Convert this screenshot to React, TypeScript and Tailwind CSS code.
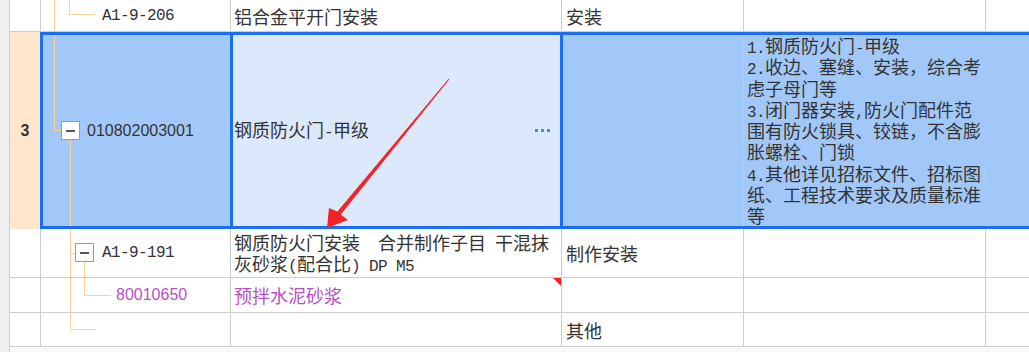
import React from "react";

const M = ({ children }: { children: React.ReactNode }) => (
  <span className="font-['Liberation_Mono',monospace] text-[16px] tracking-[-0.6px] leading-none whitespace-pre">{children}</span>
);

const Box = ({ className }: { className: string }) => (
  <div className={"absolute w-[19px] h-[19px] border border-[#9c9c9c] bg-white flex items-center justify-center " + className}>
    <div className="w-[9px] h-[2px] bg-[#555]" />
  </div>
);

const line = "absolute bg-[#fcd29c]";
const g = "border-[#cdcdcd]";
const L = "h-[21.25px] leading-[21.25px] overflow-visible";

export default function App() {
  return (
    <div className="relative w-[1029px] h-[352px] overflow-hidden bg-[#f9f9f9] flex text-[#333] font-['Noto_Sans_CJK_SC',sans-serif] text-[18px]">
      <div className={"w-[10px] h-full shrink-0 bg-[#f0f0f0] border-r " + g} />
      <div className="flex flex-col w-[1019px] shrink-0">
        {/* Row 1 */}
        <div className="flex h-[32px] shrink-0 bg-white">
          <div className={"w-[31px] shrink-0 border-r border-b " + g} />
          <div className={"relative w-[190px] shrink-0 border-r border-b flex items-center pl-[61px] " + g}>
            <div className={line + " left-[13px] top-0 bottom-0 w-px"} />
            <div className={line + " left-[28px] top-0 h-[15px] w-px"} />
            <div className={line + " left-[28px] top-[14px] h-px w-[26px]"} />
            <M>A1-9-206</M>
          </div>
          <div className={"w-[331px] shrink-0 border-r border-b flex items-center pl-[3px] leading-none " + g}>铝合金平开门安装</div>
          <div className={"w-[182px] shrink-0 border-r border-b flex items-center pl-[4px] leading-none " + g}>安装</div>
          <div className={"w-[242px] shrink-0 border-r border-b " + g} />
          <div className={"flex-1 border-b " + g} />
        </div>

        {/* Selected row */}
        <div className="flex h-[197px] shrink-0">
          <div className="w-[30px] shrink-0 bg-[#fde6cc] flex items-center justify-center font-['Liberation_Sans',sans-serif] font-bold text-[16px] text-[#333]">3</div>
          <div className="flex w-[992px] shrink-0 border-[3px] border-[#1a6ef5] bg-[#a2c8f9]">
            <div className="relative w-[187px] shrink-0 flex items-center pl-[44px] font-['Liberation_Sans',sans-serif] text-[16px]">
              <div className={line + " left-[11px] top-0 h-[96px] w-px"} />
              <div className={line + " left-[11px] top-[95px] h-px w-[7px]"} />
              <div className={line + " left-[27px] top-[105px] bottom-0 w-px"} />
              <Box className="left-[18px] top-[86px]" />
              010802003001
            </div>
            <div className="relative w-[333px] shrink-0 border-x-[3px] border-[#1a6ef5] bg-[#dce9fc] flex items-center pl-px leading-none">
              <span>钢质防火门<M>-</M>甲级</span>
              <div className="absolute left-[302px] top-[94px] flex gap-[3px]">
                <div className="w-[3px] h-[3px] bg-[#4a88d8]" />
                <div className="w-[3px] h-[3px] bg-[#4a88d8]" />
                <div className="w-[3px] h-[3px] bg-[#4a88d8]" />
              </div>
            </div>
            <div className="w-[181px] shrink-0 border-r border-[#bccadb]" />
            <div className="w-[242px] shrink-0 border-r border-[#bccadb] pl-[3px] whitespace-nowrap">
              <div className={L}><M>1.</M>钢质防火门<M>-</M>甲级</div>
              <div className={L}><M>2.</M>收边、塞缝、安装，综合考</div>
              <div className={L}>虑子母门等</div>
              <div className={L}><M>3.</M>闭门器安装<M>,</M>防火门配件范</div>
              <div className={L}>围有防火锁具、铰链，不含膨</div>
              <div className={L}>胀螺栓、门锁</div>
              <div className={L}><M>4.</M>其他详见招标文件、招标图</div>
              <div className={L}>纸、工程技术要求及质量标准</div>
              <div className={L}>等</div>
            </div>
            <div className="flex-1" />
          </div>
        </div>

        {/* Row 3 */}
        <div className="flex h-[49px] shrink-0 bg-white">
          <div className={"w-[31px] shrink-0 border-r border-b " + g} />
          <div className={"relative w-[190px] shrink-0 border-r border-b flex items-center pl-[61px] " + g}>
            <div className={line + " left-[29px] top-0 bottom-0 w-px"} />
            <div className={line + " left-[29px] top-[24px] h-px w-[5px]"} />
            <div className={line + " left-[43px] top-[33px] bottom-0 w-px"} />
            <Box className="left-[34px] top-[14px]" />
            <M>A1-9-191</M>
          </div>
          <div className={"w-[331px] shrink-0 border-r border-b flex flex-col justify-center pl-[3px] whitespace-nowrap " + g}>
            <div className="h-[21px] leading-[21px]">钢质防火门安装　合并制作子目<M> </M>干混抹</div>
            <div className="h-[21px] leading-[21px]">灰砂浆<M>(</M>配合比<M>) DP M5</M></div>
          </div>
          <div className={"w-[182px] shrink-0 border-r border-b flex items-center pl-[4px] leading-none " + g}>制作安装</div>
          <div className={"w-[242px] shrink-0 border-r border-b " + g} />
          <div className={"flex-1 border-b " + g} />
        </div>

        {/* Row 4 */}
        <div className="flex h-[35px] shrink-0 bg-white">
          <div className={"w-[31px] shrink-0 border-r border-b " + g} />
          <div className={"relative w-[190px] shrink-0 border-r border-b flex items-center pl-[75px] font-['Liberation_Sans',sans-serif] text-[16px] text-[#b84fc9] " + g}>
            <div className={line + " left-[29px] top-0 bottom-0 w-px"} />
            <div className={line + " left-[43px] top-0 h-[18px] w-px"} />
            <div className={line + " left-[43px] top-[17px] h-px w-[27px]"} />
            80010650
          </div>
          <div className={"relative w-[331px] shrink-0 border-r border-b flex items-center pl-[3px] leading-none text-[#b84fc9] " + g}>
            预拌水泥砂浆
            <div className="absolute top-0 right-0 w-0 h-0 border-t-[8px] border-l-[8px] border-t-[#ff1f1f] border-l-transparent" />
          </div>
          <div className={"w-[182px] shrink-0 border-r border-b " + g} />
          <div className={"w-[242px] shrink-0 border-r border-b " + g} />
          <div className={"flex-1 border-b " + g} />
        </div>

        {/* Row 5 */}
        <div className="flex h-[34px] shrink-0 bg-white">
          <div className={"w-[31px] shrink-0 border-r border-b " + g} />
          <div className={"relative w-[190px] shrink-0 border-r border-b " + g}>
            <div className={line + " left-[29px] top-0 h-[17px] w-px"} />
            <div className={line + " left-[29px] top-[16px] h-px w-[26px]"} />
          </div>
          <div className={"w-[331px] shrink-0 border-r border-b " + g} />
          <div className={"w-[182px] shrink-0 border-r border-b flex items-center pl-[4px] leading-none " + g}>其他</div>
          <div className={"w-[242px] shrink-0 border-r border-b " + g} />
          <div className={"flex-1 border-b " + g} />
        </div>
      </div>

      {/* Red arrow annotation */}
      <svg className="absolute left-0 top-0 pointer-events-none" width="1029" height="352" viewBox="0 0 1029 352">
        <polygon
          points="449.4,79.3 340.8,214.4 348,220 327,228 329,208 337.4,211.6 448.6,78.7"
          fill="#f42424"
        />
      </svg>
    </div>
  );
}
